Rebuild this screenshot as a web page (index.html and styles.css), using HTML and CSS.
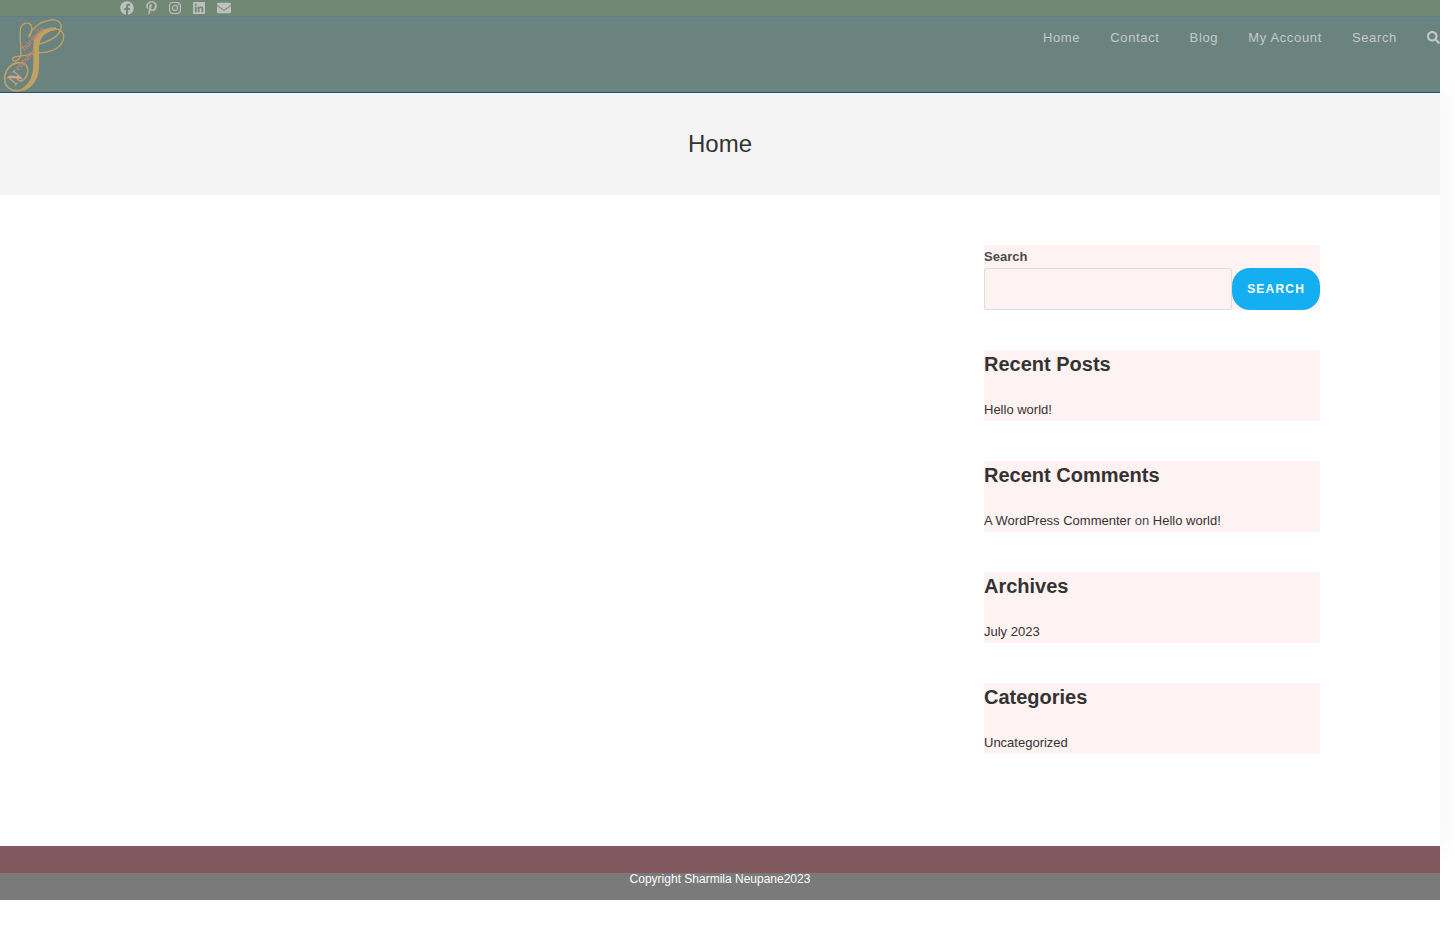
FILE: index.html
```html
<!DOCTYPE html>
<html lang="en">
<head>
<meta charset="utf-8">
<meta name="viewport" content="width=device-width, initial-scale=1">
<title>Home</title>
<link rel="stylesheet" href="styles.css">
</head>
<body>
<div class="topbar">
  <div class="container social">
    <a href="#" aria-label="Facebook"><svg class="icon" viewBox="0 0 512 512"><path d="M504 256C504 119 393 8 256 8S8 119 8 256c0 123.800 90.700 226.400 209.300 245V327.700h-63V256h63v-54.600c0-62.200 37-96.500 93.700-96.500 27.100 0 55.500 4.800 55.500 4.800v61h-31.300c-30.800 0-40.400 19.100-40.400 38.700V256h68.800l-11 71.700h-57.800V501C413.300 482.400 504 379.800 504 256z"/></svg></a>
    <a href="#" aria-label="Pinterest"><svg class="icon icon-narrow" viewBox="0 0 384 512"><path d="M204 6.500C101.400 6.500 0 74.900 0 185.600 0 256 39.600 296 63.600 296c9.900 0 15.600-27.600 15.600-35.400 0-9.300-23.700-29.100-23.700-67.800 0-80.400 61.200-137.400 140.400-137.400 68.100 0 118.500 38.700 118.500 109.800 0 53.100-21.300 152.700-90.300 152.700-24.900 0-46.200-18-46.200-43.800 0-37.800 26.400-74.400 26.400-113.400 0-66.200-93.900-54.200-93.900 25.800 0 16.800 2.100 35.400 9.600 50.700-13.800 59.400-42 147.900-42 209.100 0 18.900 2.700 37.500 4.500 56.400 3.400 3.800 1.700 3.400 6.900 1.500 50.400-69 48.600-82.500 71.400-172.800 12.300 23.400 44.100 36 69.300 36 106.200 0 153.900-103.500 153.900-196.800C384 71.300 298.200 6.500 204 6.500z"/></svg></a>
    <a href="#" aria-label="Instagram"><svg class="icon icon-mid" viewBox="0 0 448 512"><path fill-rule="evenodd" d="M130 32h188c72 0 130 58 130 130v188c0 72-58 130-130 130H130C58 480 0 422 0 350V162C0 90 58 32 130 32zm6 41c-54 0-95 41-95 95v176c0 54 41 95 95 95h176c54 0 95-41 95-95V168c0-54-41-95-95-95zm88 68a115 115 0 1 1 0 230 115 115 0 0 1 0-230zm0 40a75 75 0 1 0 0 150 75 75 0 0 0 0-150zm120-72a27 27 0 1 1 0 54 27 27 0 0 1 0-54z"/></svg></a>
    <a href="#" aria-label="LinkedIn"><svg class="icon icon-mid" viewBox="0 0 448 512"><path d="M416 32H31.900C14.300 32 0 46.500 0 64.300v383.400C0 465.500 14.300 480 31.900 480H416c17.600 0 32-14.500 32-32.300V64.300c0-17.800-14.400-32.300-32-32.300zM135.400 416H69V202.200h66.500V416zm-33.200-243c-21.300 0-38.500-17.300-38.500-38.500S80.900 96 102.200 96c21.200 0 38.500 17.300 38.500 38.500 0 21.300-17.200 38.500-38.500 38.500zm282.100 243h-66.400V312c0-24.800-.5-56.700-34.500-56.700-34.600 0-39.900 27-39.900 54.900V416h-66.400V202.200h63.700v29.200h.9c8.900-16.800 30.600-34.500 62.900-34.500 67.200 0 79.700 44.300 79.700 101.900V416z"/></svg></a>
    <a href="#" aria-label="Email"><svg class="icon" viewBox="0 0 512 512"><path d="M502.300 190.800c3.900-3.100 9.700-.2 9.700 4.700V400c0 26.500-21.500 48-48 48H48c-26.500 0-48-21.500-48-48V195.600c0-5 5.700-7.800 9.700-4.700 22.400 17.400 52.100 39.500 154.100 113.600 21.100 15.400 56.700 47.800 92.200 47.600 35.700.3 72-32.800 92.300-47.600 102-74.100 131.600-96.300 154-113.700zM256 320c23.200.4 56.600-29.200 73.400-41.400 132.700-96.300 142.800-104.700 173.400-128.700 5.800-4.500 9.200-11.500 9.200-18.900v-19c0-26.500-21.500-48-48-48H48c-26.500 0-48 21.500-48 48v19c0 7.400 3.400 14.300 9.200 18.900 30.600 23.900 40.700 32.400 173.400 128.700 16.800 12.200 50.200 41.800 73.400 41.400z"/></svg></a>
  </div>
</div>
<header class="header">
  <a href="#" class="logo" aria-label="Sharmila Neupane">
    <svg viewBox="0 51 204 225">
      <g fill="none" stroke="#bfa263" stroke-linecap="round">
        <path stroke-width="4" d="M62 162C65 134 56 105 62 85C68 65 91 65 95 80C98 90 92 102 88 112"/>
        <path stroke-width="4" d="M86 108C100 80 120 66 145 61C170 55 187 67 183 84C178 108 148 124 118 132"/>
        <path stroke-width="4" d="M115 158C145 159 179 148 189 122C197 99 182 85 160 87"/>
        <path stroke-width="4" d="M96 161C82 168 60 167 45 171C31 176 39 187 51 181C59 177 62 168 63 160"/>
        <path stroke-width="5" d="M60 271C31 276 14 260 14 237C14 209 32 190 58 188C79 187 86 204 82 220C77 242 57 249 52 236"/>
      </g>
      <path fill="#bfa263" d="M168 82C130 82 106 98 101 126C98 150 102 178 99 207C96 240 81 262 50 273C84 277 110 250 115 218C121 187 114 157 118 132C124 106 141 94 168 90z"/>
      <g class="logo-text">
        <text class="logo-name" transform="translate(73 154) rotate(-47)">harmila</text>
        <text class="logo-name" transform="translate(54 213) rotate(-48)">eupane</text>
        <text class="logo-initial" transform="translate(44 259) rotate(-48)">N</text>
      </g>
    </svg>
  </a>
  <nav class="nav" aria-label="Main">
    <a href="#">Home</a>
    <a href="#">Contact</a>
    <a href="#">Blog</a>
    <a href="#">My Account</a>
    <a href="#">Search</a>
    <a href="#" aria-label="Open search"><svg class="icon-search" viewBox="0 0 512 512"><path d="M505 442.700L405.300 343c-4.500-4.500-10.600-7-17-7H372c27.600-35.300 44-79.700 44-128C416 93.100 322.900 0 208 0S0 93.100 0 208s93.100 208 208 208c48.300 0 92.700-16.400 128-44v16.300c0 6.400 2.500 12.500 7 17l99.700 99.700c9.400 9.400 24.600 9.400 33.900 0l28.300-28.300c9.400-9.400 9.400-24.600.1-34zM208 336c-70.700 0-128-57.200-128-128 0-70.700 57.200-128 128-128 70.700 0 128 57.200 128 128 0 70.700-57.200 128-128 128z"/></svg></a>
  </nav>
</header>
<main class="main">
  <div class="page-title"><h1>Home</h1></div>
  <div class="container content">
    <aside class="sidebar">
      <form class="widget">
        <label for="s">Search</label>
        <div class="search-row">
          <input id="s" type="search">
          <button type="button">SEARCH</button>
        </div>
      </form>
      <section class="widget"><h2>Recent Posts</h2><p><a href="#">Hello world!</a></p></section>
      <section class="widget"><h2>Recent Comments</h2><p><a href="#">A WordPress Commenter</a> on <a href="#">Hello world!</a></p></section>
      <section class="widget"><h2>Archives</h2><p><a href="#">July 2023</a></p></section>
      <section class="widget"><h2>Categories</h2><p><a href="#">Uncategorized</a></p></section>
    </aside>
  </div>
</main>
<footer class="footer">
  <div class="footer-widgets"></div>
  <div class="footer-bottom">Copyright Sharmila Neupane2023</div>
</footer>
</body>
</html>
```
FILE: styles.css
```css
* { box-sizing: border-box; }
body {
  margin: 0;
  padding-right: 15px;
  overflow-x: hidden;
  background: #fff;
  color: #4a4a4a;
  font: 13px/23px "Liberation Sans", Arial, sans-serif;
}
a { color: #333; text-decoration: none; }
h1, h2, p { margin: 0; }
.container { width: 100%; max-width: 1200px; margin: 0 auto; }

.topbar, .header, .footer { position: relative; z-index: 1; }
.topbar { background: #718874; border-bottom: 1px solid #5d7f8c; }
.social { display: flex; align-items: center; gap: 12px; height: 16px; }
.social a { display: flex; }
.icon { width: 14px; height: 14px; fill: #bfbfbf; }
.icon-narrow { width: 11px; }
.icon-mid { width: 12px; }

.header {
  display: flex;
  justify-content: space-between;
  align-items: flex-start;
  background: #6a837f;
  border-bottom: 1px solid #22506f;
}
.logo, .logo svg { display: block; }
.logo svg { width: 68px; height: 75px; }
.logo-text { font-family: "Liberation Serif", serif; }
.logo-name { font-size: 27px; font-style: italic; font-weight: bold; fill: #c08370; }
.logo-initial { font-size: 52px; font-weight: bold; fill: #d1a482; }
.nav { display: flex; gap: 30px; padding-top: 9px; letter-spacing: 0.05em; }
.nav a { display: flex; align-items: center; color: #c6c9c8; }
.icon-search { width: 13px; height: 13px; fill: #c6c9c8; }

.main { box-shadow: 0 0 30px rgba(0, 0, 0, 0.06); }
.page-title { padding: 34px 0; background: #f4f4f4; text-align: center; }
.page-title h1 { color: #333; font-size: 24px; font-weight: 400; line-height: 34px; }
.content { display: flex; justify-content: flex-end; padding: 50px 0 92px; }
.sidebar { display: flex; flex-direction: column; gap: 40px; width: 28%; }
.widget { background: #fff2f2; }
.widget label { display: block; font-weight: 700; }
.widget h2 { margin-bottom: 20px; color: #333; font-size: 20px; line-height: 28px; }
.search-row { display: flex; }
.search-row input {
  flex: 1;
  min-width: 0;
  height: 42px;
  padding: 0 12px;
  border: 1px solid #ddd;
  border-radius: 3px;
  background: transparent;
  font: inherit;
  appearance: none;
}
.search-row button {
  padding: 0 15px;
  border: 0;
  border-radius: 18px;
  background: #13aff0;
  color: #fff;
  font: 700 12px "Liberation Sans", Arial, sans-serif;
  letter-spacing: 0.1em;
}

.footer-widgets { height: 27px; background: #80595f; }
.footer-bottom {
  padding-bottom: 15px;
  background: #7a7a7a;
  color: #fff;
  font-size: 12px;
  line-height: 12px;
  text-align: center;
}
```
